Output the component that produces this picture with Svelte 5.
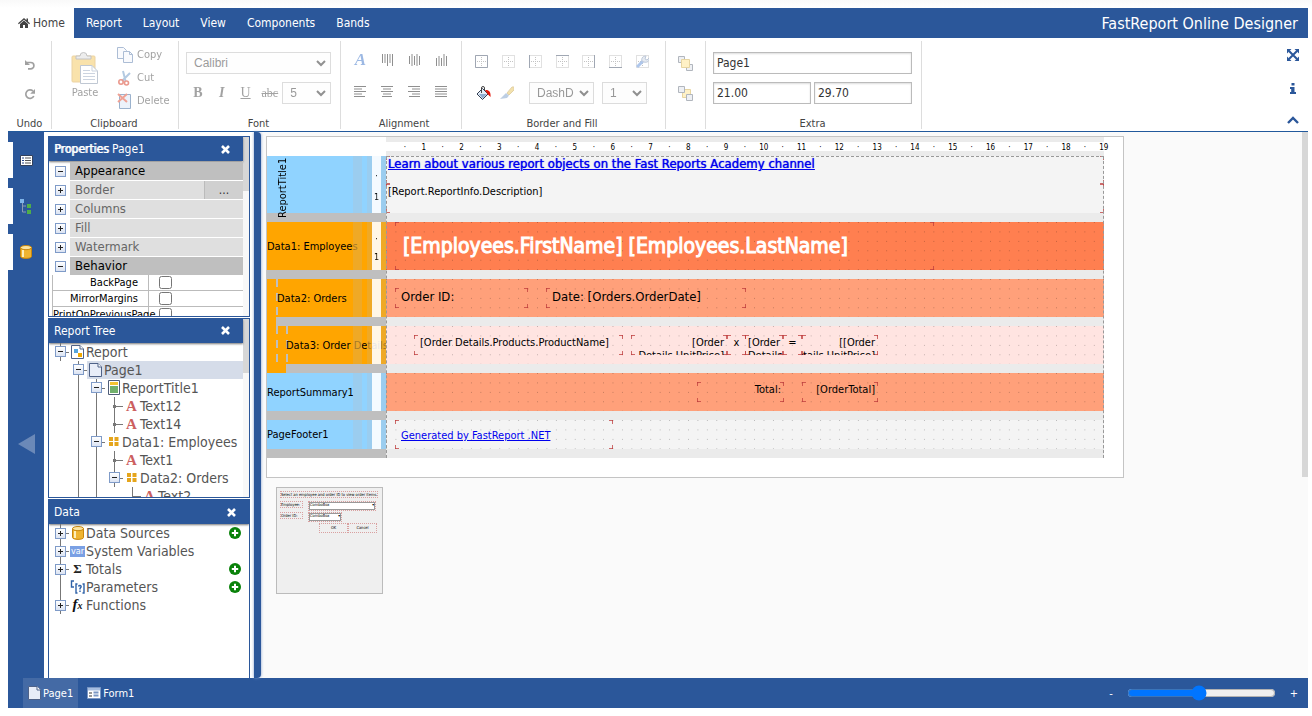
<script>
  const menu = ['Report', 'Layout', 'View', 'Components', 'Bands'];

  const props = [
    { label: 'Appearance', head: true },
    { label: 'Border', more: true },
    { label: 'Columns' },
    { label: 'Fill' },
    { label: 'Watermark' },
    { label: 'Behavior', head: true }
  ];
  const flags = ['BackPage', 'MirrorMargins', 'PrintOnPreviousPage'];

  // guides: one letter per indent cell. i = line, e = empty, t = toggle, b = branch, l = last branch
  const tree = [
    { guides: 't', icon: 'report', label: 'Report' },
    { guides: 'et', icon: 'page', label: 'Page1', selected: true },
    { guides: 'eit', icon: 'title', label: 'ReportTitle1' },
    { guides: 'eiib', icon: 'text', label: 'Text12' },
    { guides: 'eiib', icon: 'text', label: 'Text14' },
    { guides: 'eit', icon: 'band', label: 'Data1: Employees' },
    { guides: 'eiib', icon: 'text', label: 'Text1' },
    { guides: 'eiit', icon: 'band', label: 'Data2: Orders' },
    { guides: 'eiiel', icon: 'text', label: 'Text2' }
  ];

  const data = [
    { guides: 't', icon: 'db', label: 'Data Sources', closed: true, add: true },
    { guides: 't', icon: 'var', label: 'System Variables', closed: true },
    { guides: 't', icon: 'sum', label: 'Totals', closed: true, add: true },
    { guides: 'i', icon: 'param', label: 'Parameters', add: true },
    { guides: 't', icon: 'fx', label: 'Functions', closed: true }
  ];

  const ticks = Array.from({ length: 19 }, (_, i) => i + 1);

  // object boxes are in pixels from the band's top left corner
  const bands = [
    {
      name: 'ReportTitle1', kind: 'blue', h: 57, fill: '#f4f4f4', vertical: true, ruler: true,
      items: [
        { x: 0, y: 0, w: 718, h: 28, cls: 'learn solid', text: 'Learn about various report objects on the Fast Reports Academy channel', link: true },
        { x: 0, y: 28, w: 718, h: 29, cls: 'desc solid', text: '[Report.ReportInfo.Description]' }
      ]
    },
    {
      name: 'Data1: Employees', kind: 'orange', h: 48, fill: '#ff7f50', ruler: true,
      items: [{ x: 9, y: 0, w: 539, h: 48, cls: 'emp', text: '[Employees.FirstName] [Employees.LastName]' }]
    },
    {
      name: 'Data2: Orders', kind: 'orange', h: 38, fill: '#ffa07a', level: 1,
      items: [
        { x: 9, y: 9, w: 133, h: 20, cls: 'big', text: 'Order ID:' },
        { x: 160, y: 9, w: 200, h: 20, cls: 'big', text: 'Date: [Orders.OrderDate]' }
      ]
    },
    {
      name: 'Data3: Order Details', kind: 'orange', h: 38, fill: '#ffe4e1', level: 2,
      items: [
        { x: 28, y: 9, w: 209, h: 20, cls: '', text: '[Order Details.Products.ProductName]' },
        { x: 245, y: 9, w: 96, h: 20, cls: 'right', text: '[Order Details.UnitPrice]' },
        { x: 341, y: 9, w: 19, h: 20, cls: 'tight', text: 'x' },
        { x: 359, y: 9, w: 38, h: 20, cls: 'right', text: '[Order Details.Quantity]' },
        { x: 397, y: 9, w: 19, h: 20, cls: 'tight', text: '=' },
        { x: 416, y: 9, w: 76, h: 20, cls: 'right ending', text: '[[Order Details.UnitPrice]' }
      ]
    },
    {
      name: 'ReportSummary1', kind: 'blue', h: 38, fill: '#ffa07a',
      items: [
        { x: 311, y: 9, w: 87, h: 20, cls: 'right', text: 'Total:' },
        { x: 416, y: 9, w: 76, h: 20, cls: 'right', text: '[OrderTotal]' }
      ]
    },
    {
      name: 'PageFooter1', kind: 'blue', h: 29, fill: '#f4f4f4',
      items: [{ x: 9, y: 0, w: 218, h: 29, cls: 'foot', text: 'Generated by FastReport .NET', link: true }]
    }
  ];
</script>

{#snippet glyph(name)}
  {#if name === 'home'}
    <svg width="12" height="12" viewBox="0 0 12 12" fill="#444"><path d="M6 1 0 6.300l.8.9L6 2.700l5.200 4.500.8-.9L10 4.500V1.500H8.500v1.700z" /><path d="M2 7 6 3.500 10 7v4H7V8H5v3H2z" /></svg>
  {:else if name === 'undo'}
    <svg width="12" height="12" viewBox="0 0 12 12" fill="none"><path d="M2.500 3.500h4.200a3.200 3.200 0 0 1 0 6.400H4" stroke="#444" stroke-width="1.700" /><path d="M1 1v5h5z" fill="#444" /></svg>
  {:else if name === 'redo'}
    <svg width="12" height="12" viewBox="0 0 12 12" fill="none"><path d="M9.800 8A4.200 4.200 0 1 1 9 3.200" stroke="#444" stroke-width="1.700" /><path d="M11 1v4.800H6.200z" fill="#444" /></svg>
  {:else if name === 'paste'}
    <svg width="28" height="32" viewBox="0 0 28 32"><rect x="1" y="4" width="23" height="26" rx="1" fill="#f5c65a" stroke="#d9a848" /><path d="M5 7h15V4h-4a3.500 3.500 0 0 0-7 0H5z" fill="#ddd" stroke="#888" /><path d="M9.500 13.500H21l5.500 5.500v12.500h-17z" fill="#fff" stroke="#8292a8" /><path d="M21 13.500V19h5.500M12 18.500h7M12 21.500h12M12 24.500h12M12 27.500h12" fill="none" stroke="#9aabc2" /></svg>
  {:else if name === 'copy'}
    <svg width="16" height="16" viewBox="0 0 16 16" fill="#f4f7fd" stroke="#5b7dac"><path d="M.500.500h6l3 3v8h-9z" /><path d="M6.500 4.500h6l3 3v8h-9z" /><path d="M12.500 4.500v3h3" fill="none" /></svg>
  {:else if name === 'cut'}
    <svg width="16" height="16" viewBox="0 0 16 16" fill="none"><path d="M6 1 8.500 11M13 3 5 11" stroke="#6a96c4" stroke-width="2" /><circle cx="4" cy="12" r="2.200" stroke="#d6331c" stroke-width="1.600" /><circle cx="9.500" cy="13" r="2" stroke="#d6331c" stroke-width="1.600" /></svg>
  {:else if name === 'delete'}
    <svg width="16" height="16" viewBox="0 0 16 16" fill="none"><path d="M2.500 1.500h11v14h-11z" fill="#dbe7f6" stroke="#39679c" /><path d="m1 1 9 8M10 1 1 9" stroke="#e0452c" stroke-width="2" /></svg>
  {:else if name === 'valign-top' || name === 'valign-mid' || name === 'valign-bottom'}
    <svg width="13" height="13" viewBox="0 0 13 13" stroke="#222"><path d={name === 'valign-top' ? 'M1.500 0v9M4 0v9M6.500 0v12M9 0v9M11.500 0v12' : name === 'valign-mid' ? 'M1.500 2v8M4 0v12M6.500 2v9M9 0v12M11.500 2v9' : 'M1.500 4v8M4 2v10M6.500 4v8M9 0v12M11.500 2v10'} /></svg>
  {:else if name === 'left' || name === 'center' || name === 'right' || name === 'justify'}
    <svg width="13" height="12" viewBox="0 0 13 12" stroke="#222"><path d={name === 'left' ? 'M0 .500h12M0 3h8M0 5.500h12M0 8h8M0 10.500h11' : name === 'center' ? 'M0 .500h12M2 3h8M0 5.500h12M2 8h8M1 10.500h10' : name === 'right' ? 'M0 .500h12M4 3h8M0 5.500h12M4 8h8M1 10.500h11' : 'M0 .500h12M0 3h12M0 5.500h12M0 8h12M0 10.500h12'} /></svg>
  {:else if name.startsWith('bd-')}
    <svg width="13" height="13" viewBox="0 0 13 13" fill="none" stroke="#44526a">
      <path d="M.500.500h12v12H.500z" stroke-dasharray="1 1" stroke="#888" />
      <path d="M6.500 2v9M2 6.500h9" stroke-dasharray="1 1" stroke="#888" />
      <path d={name === 'bd-all' ? 'M.500.500h12v12H.500z' : name === 'bd-left' ? 'M.500 0v13' : name === 'bd-top' ? 'M0 .500h13' : name === 'bd-right' ? 'M12.500 0v13' : name === 'bd-bottom' ? 'M0 12.500h13' : 'M0 0'} />
      {#if name === 'bd-edit'}<path d="m1 12 6-6" stroke="#5f8fd8" stroke-width="3" /><path d="M6 6c-1-3 1-5 4-5L9 4l2 1 2-2c1 3-2 5-5 4z" fill="#ccd6e4" stroke="#7e93b4" />{/if}
    </svg>
  {:else if name === 'bucket'}
    <svg width="15" height="14" viewBox="0 0 15 14"><path d="m1 8 5.500-5.500L12 8l-5.500 5.500z" fill="#e4edf7" stroke="#333e52" /><path d="M3 8h8l-4.500 4.500z" fill="#8eacd0" /><path d="M5.500 7V2a1.500 1.500 0 0 1 3 0v2" fill="none" stroke="#444" /><path d="M9 4c4-.500 6 2 5.500 7L11.500 8z" fill="#e3170a" /></svg>
  {:else if name === 'brush'}
    <svg width="14" height="14" viewBox="0 0 14 14"><path d="m7 7 5-6h2v3L9 9z" fill="#e8c45c" stroke="#c5a452" /><path d="M6 7 9 9.500 7 12l-7 1z" fill="#7e9fc8" /></svg>
  {:else if name === 'front' || name === 'back'}
    <svg width="15" height="15" viewBox="0 0 15 15" fill="#dfe3ea" stroke="#66707e">
      {#if name === 'front'}<path d="M.500.500h6v6h-6zM8.500 8.500h6v6h-6z" /><path d="M3.500 3.500h8v8h-8z" fill="#ffe48f" stroke="#d0ac48" />
      {:else}<path d="M4.500 3.500h8v8h-8z" fill="#ffe48f" stroke="#d0ac48" /><path d="M.500.500h6v6h-6zM8.500 8.500h6v6h-6z" />{/if}
    </svg>
  {:else if name === 'expand'}
    <svg width="12" height="12" viewBox="0 0 12 12" fill="#2b579a"><path d="M0 0h4.500L0 4.500zM12 0v4.500L7.500 0zM0 12V7.500L4.500 12zM12 12H7.500L12 7.500z" /><path d="m2 2 8 8M10 2l-8 8" stroke="#2b579a" stroke-width="2" /></svg>
  {:else if name === 'info'}
    <svg width="6" height="11" viewBox="0 0 6 11" fill="#2b579a"><path d="M1.500 0h3v2.500h-3zM0 4h4.500v5H6v2H0V9h1.200V6H0z" /></svg>
  {:else if name === 'up'}
    <svg width="12" height="8" viewBox="0 0 12 8" fill="none" stroke="#2b579a" stroke-width="2.400"><path d="m1 7 5-5 5 5" /></svg>
  {:else if name === 'close'}
    <svg width="9" height="9" viewBox="0 0 9 9" stroke="#fff" stroke-width="2.600"><path d="m1 1 7 7M8 1 1 8" /></svg>
  {:else if name === 'list'}
    <svg width="13" height="11" viewBox="0 0 13 11"><path d="M.500.500h12v10H.500z" fill="#fff" stroke="#34415c" /><path d="M2 3h2M2 5.500h2M2 8h2" stroke="#26448a" /><path d="M5 3h6M5 5.500h6M5 8h6" stroke="#555" /></svg>
  {:else if name === 'nodes'}
    <svg width="12" height="15" viewBox="0 0 12 15"><path d="M2.500 4v9H6M2.500 7H6" fill="none" stroke="#8c9bb5" /><path d="M0 0h4v4H0z" fill="#7fb5ea" /><path d="M7 5h4v4H7zM7 11h4v4H7z" fill="#4fae4a" /></svg>
  {:else if name === 'db'}
    <svg width="12" height="14" viewBox="0 0 12 14"><path d="M.500 2.500v9c0 2.500 11 2.500 11 0v-9z" fill="#efb431" stroke="#c8860d" /><path d="M3 5v7" stroke="#fdeeb9" stroke-width="2" /><ellipse cx="6" cy="2.600" rx="5.500" ry="2.100" fill="#fbe3a0" stroke="#c8860d" /></svg>
  {:else if name === 'report' || name === 'page'}
    <svg width="13" height="14" viewBox="0 0 13 14"><path d="M.500.500h8.500l3.500 3.500v9.500H.500z" fill={name === 'page' ? '#e8edf8' : '#fff'} stroke="#4f6288" /><path d="M9 .500V4h3.500" fill="#fff" stroke="#4f6288" />{#if name === 'report'}<path d="M3 4h4v4H3z" fill="#56a5dd" /><path d="M7 8h4v4H7z" fill="#f0a800" />{/if}</svg>
  {:else if name === 'title'}
    <svg width="12" height="15" viewBox="0 0 12 15"><path d="M.500.500h11v14H.500z" fill="#fff" stroke="#4f5d78" /><path d="M2 2h8v3H2z" fill="#f5c431" /><path d="M2 6h8v7H2z" fill="#72b06c" /></svg>
  {:else if name === 'band'}
    <svg width="10" height="9" viewBox="0 0 10 9" fill="#e5a51c"><path d="M0 0h4v4H0zM5.500 0h4v4h-4zM0 5h4v4H0zM5.500 5h4v4h-4z" /></svg>
  {:else if name === 'text'}
    <b class="red-a">A</b>
  {:else if name === 'var'}
    <span class="var">var</span>
  {:else if name === 'sum'}
    <b class="sum">Σ</b>
  {:else if name === 'param'}
    <svg width="15" height="14" viewBox="0 0 15 14" fill="none" stroke="#2f62a8" stroke-width="1.400"><path d="M4 1H1.500v6H4M7.500 4H6v9h1.500M12.500 4H14v9h-1.500" /><path d="M8.500 6.500c.500-1.500 3-1.200 2.600.500L10 8.500v1M10 10.500V12" /></svg>
  {:else if name === 'fx'}
    <i class="fx">f<small>x</small></i>
  {:else if name === 'add'}
    <svg width="12" height="12" viewBox="0 0 12 12"><circle cx="6" cy="6" r="6" fill="#0a820a" /><path d="M6 2.800v6.400M2.800 6h6.400" stroke="#fff" stroke-width="2" /></svg>
  {:else if name === 'form'}
    <svg width="14" height="12" viewBox="0 0 14 12"><path d="M.500.500h13v11H.500z" fill="#fff" stroke="#7996c4" /><path d="M1 1h12v2.500H1z" fill="#a5bde0" /><path d="M2 6h3M2 9h3" stroke="#333" /><path d="M6.500 5.500h5M6.500 8.500h5" stroke="#7996c4" stroke-width="2" /></svg>
  {/if}
{/snippet}

{#snippet row(item)}
  <li class="node" class:selected={item.selected}>
    {#each item.guides.split('') as g}
      <span class="guide {g}">{#if g === 't'}<button class="toggle" class:closed={item.closed} aria-label="Toggle {item.label}"></button>{/if}</span>
    {/each}
    <span class="leaf">
      <span class="ico">{@render glyph(item.icon)}</span>
      <span class="label">{item.label}</span>
      {#if item.add}<button class="add" aria-label="Add to {item.label}">{@render glyph('add')}</button>{/if}
    </span>
  </li>
{/snippet}

<div class="app">
  <header>
    <nav>
      <button class="tab active">{@render glyph('home')} Home</button>
      {#each menu as m}<button class="tab">{m}</button>{/each}
    </nav>
    <h1>FastReport Online Designer</h1>
  </header>

  <div class="ribbon">
    <section class="group undo">
      <div class="body stack dim">
        <button aria-label="Undo">{@render glyph('undo')}</button>
        <button aria-label="Redo">{@render glyph('redo')}</button>
      </div>
      <h2>Undo</h2>
    </section>
    <section class="group clipboard">
      <div class="body dim">
        <button class="paste">{@render glyph('paste')}<span>Paste</span></button>
        <div class="cmds">
          <button>{@render glyph('copy')}Copy</button>
          <button>{@render glyph('cut')}Cut</button>
          <button>{@render glyph('delete')}Delete</button>
        </div>
      </div>
      <h2>Clipboard</h2>
    </section>
    <section class="group font">
      <div class="body rows dim">
        <select aria-label="Font family"><option>Calibri</option></select>
        <div class="line">
          <button class="fmt"><b>B</b></button>
          <button class="fmt"><b><i>I</i></b></button>
          <button class="fmt"><u>U</u></button>
          <button class="fmt abc"><s>abc</s></button>
          <select class="size" aria-label="Font size"><option>5</option></select>
        </div>
      </div>
      <h2>Font</h2>
    </section>
    <section class="group align">
      <div class="body tools dim">
        <button class="color-a" aria-label="Text color"><b><i>A</i></b></button>
        {#each ['valign-top', 'valign-mid', 'valign-bottom', 'left', 'center', 'right', 'justify'] as n}
          <button aria-label={n}>{@render glyph(n)}</button>
        {/each}
      </div>
      <h2>Alignment</h2>
    </section>
    <section class="group border">
      <div class="body rows">
        <div class="line icons dim">
          {#each ['bd-all', 'bd-none', 'bd-left', 'bd-top', 'bd-right', 'bd-bottom', 'bd-edit'] as n}
            <button aria-label={n}>{@render glyph(n)}</button>
          {/each}
        </div>
        <div class="line">
          <button class="pick" aria-label="Fill">{@render glyph('bucket')}</button>
          <button class="pick dim" aria-label="Line color">{@render glyph('brush')}</button>
          <select class="style dim" aria-label="Line style"><option>DashD</option></select>
          <select class="width dim" aria-label="Line width"><option>1</option></select>
        </div>
      </div>
      <h2>Border and Fill</h2>
    </section>
    <section class="group order">
      <div class="body rows dim">
        <button aria-label="Bring to front">{@render glyph('front')}</button>
        <button aria-label="Send to back">{@render glyph('back')}</button>
      </div>
    </section>
    <section class="group extra">
      <div class="body rows">
        <input aria-label="Name" value="Page1" />
        <div class="line pair">
          <input aria-label="Page width" value="21.00" />
          <input aria-label="Page height" value="29.70" />
        </div>
      </div>
      <h2>Extra</h2>
    </section>
    <div class="side">
      <button aria-label="Full screen">{@render glyph('expand')}</button>
      <button aria-label="About">{@render glyph('info')}</button>
      <button aria-label="Collapse ribbon">{@render glyph('up')}</button>
    </div>
  </div>

  <main>
    <aside class="rail">
      {#each ['list', 'nodes', 'db'] as n}<button class="flag" aria-label={n}>{@render glyph(n)}</button>{/each}
      <button class="hide" aria-label="Hide panels"></button>
    </aside>

    <div class="panels">
      <section class="panel">
        <div class="main">
          <div class="bar"><span><span class="strong">Properties</span> Page1</span><button aria-label="Close properties">{@render glyph('close')}</button></div>
          <div class="props">
            {#each props as p}
              <div class="prop" class:head={p.head}>
                <button class="toggle" class:closed={!p.head} aria-label="Toggle {p.label}"></button>
                <span>{p.label}</span>
                {#if p.more}<button class="more">...</button>{/if}
              </div>
            {/each}
            {#each flags as f}
              <label class="bool"><span>{f}</span><input type="checkbox" /></label>
            {/each}
          </div>
        </div>
        <div class="scroll"><i></i></div>
      </section>
      <section class="panel">
        <div class="main">
          <div class="bar"><span>Report Tree</span><button aria-label="Close tree">{@render glyph('close')}</button></div>
          <ul>{#each tree as t}{@render row(t)}{/each}</ul>
        </div>
        <div class="scroll"><i></i></div>
      </section>
      <section class="panel">
        <div class="main">
          <div class="bar"><span>Data</span><button aria-label="Close data">{@render glyph('close')}</button></div>
          <ul>{#each data as t}{@render row(t)}{/each}</ul>
        </div>
      </section>
    </div>
    <div class="splitter"></div>

    <div class="canvas">
      <div class="workspace">
        <div class="page">
          <div class="ruler">
            {#each ticks as t}<span class="tick">·</span><span class="tick">{t}</span>{/each}
          </div>
          {#each bands as b}
            <div class="band {b.kind} level{b.level ?? 0}">
              <div class="head" style:height="{b.h}px">
                <span class="name" class:vertical={b.vertical}>{b.name}</span>
                <i class="stripe one"></i><i class="stripe two"></i>
                <span class="vruler">{#if b.ruler}<span>·</span><span>1</span>{/if}</span>
                <i class="stripe two"></i>
              </div>
              <div class="field" style:background-color={b.fill}>
                {#each b.items as o}
                  <div class="obj {o.cls}" style:left="{o.x}px" style:top="{o.y}px" style:width="{o.w}px" style:height="{o.h}px">
                    {#if o.link}<a href="#report">{o.text}</a>{:else}<span>{o.text}</span>{/if}
                  </div>
                {/each}
              </div>
              <div class="grip"></div>
              <div class="gap"></div>
            </div>
          {/each}
          <div class="margins"></div>
        </div>

        <div class="form">
          <p><span class="mark">Select an employee and order ID to view order items.</span></p>
          <p><span class="mark key">Employee:</span><span class="mark combo wide">ComboBox<i>▾</i></span></p>
          <p><span class="mark key">Order ID:</span><span class="mark combo">ComboBox<i>▾</i></span></p>
          <p class="btns"><span class="mark">OK</span><span class="mark">Cancel</span></p>
        </div>
      </div>
      <div class="thumb"></div>
    </div>
  </main>

  <footer>
    <button class="sheet active">{@render glyph('page')}Page1</button>
    <button class="sheet">{@render glyph('form')}Form1</button>
    <div class="zoom">
      <button aria-label="Zoom out">-</button>
      <input type="range" min="0" max="100" value="48" aria-label="Zoom" />
      <button aria-label="Zoom in">+</button>
    </div>
  </footer>
</div>

<style>
  :global(body) { margin: 0; background: linear-gradient(#f9f9f9, #fff 8px); }
  .app { --blue: #2b579a; box-sizing: border-box; height: 100vh; padding: 8px 4px 8px 8px; display: flex; flex-direction: column; font: 12px "DejaVu Sans Condensed", "Noto Sans", sans-serif; color: #444; }
  .app :global(*) { box-sizing: border-box; }
  button { font: inherit; color: inherit; background: none; border: 0; padding: 0; margin: 0; display: flex; align-items: center; justify-content: center; }
  svg { display: block; flex: none; }
  h1, h2, p, ul { margin: 0; padding: 0; font-weight: normal; list-style: none; }
  i { font-style: normal; }

  header { flex: none; height: 30px; background: var(--blue); color: #fff; display: flex; justify-content: space-between; align-items: center; padding-right: 10px; }
  nav { display: flex; height: 100%; gap: 1px; }
  .tab { padding: 0 10px; gap: 3px; }
  .tab.active { background: #fff; color: #444; margin-right: 1px; padding-right: 9px; }
  h1 { font-size: 16px; }

  .ribbon { flex: none; height: 94px; background: #fff; border-bottom: 1px solid #22599c; display: flex; padding: 3px 0 2px; font-size: 11px; }
  .group { display: flex; flex-direction: column; justify-content: space-between; border-right: 1px solid #ddd; padding: 11px 9px 0 7px; }
  .group h2 { font-size: 11px; line-height: 10px; text-align: center; }
  .body { display: flex; }
  .dim { opacity: .5; }
  .rows { flex-direction: column; gap: 8px; }
  .line { display: flex; align-items: center; height: 22px; }
  .undo { width: 44px; padding: 18px 0 0; }
  .stack { flex-direction: column; align-items: center; gap: 17px; }
  .clipboard { width: 127px; padding-top: 2px; }
  .clipboard .body { justify-content: space-between; padding: 0 0 0 12px; }
  .paste { flex-direction: column; gap: 2px; padding-top: 9px; justify-content: flex-start; }
  .cmds { width: 52px; display: flex; flex-direction: column; }
  .cmds button { height: 23px; justify-content: flex-start; gap: 4px; }
  .font { width: 162px; }
  select { appearance: none; height: 22px; width: 100%; border: 1px solid #bbb; background: #fcfcfc url("data:image/svg+xml,%3Csvg xmlns='http://www.w3.org/2000/svg' width='10' height='7' fill='none' stroke='%23222' stroke-width='2'%3E%3Cpath d='m1 1 4 4 4-4'/%3E%3C/svg%3E") no-repeat right 4px center; color: #333; font: 12px "Liberation Sans", Arial, sans-serif; padding: 0 7px; border-radius: 0; }
  select.size { width: 49px; margin-left: auto; }
  .fmt { width: 24px; font: 14px "Liberation Serif", serif; }
  .fmt.abc { font-size: 12px; width: 25px; }
  .fmt i, .color-a i { font-style: italic; }
  .align { width: 121px; padding-right: 0; padding-top: 9px; padding-left: 6px; }
  .tools { display: grid; grid-template-columns: repeat(4, 27px); grid-auto-rows: 22px; row-gap: 9px; }
  .tools button:nth-child(-n + 4) { height: 20px; }
  .color-a { font: 17px "Liberation Serif", serif; color: #3b74c8; }
  .border { width: 204px; padding-left: 6px; }
  .icons { align-items: flex-start; padding-top: 3px; }
  .icons button { width: 27px; }
  .pick { width: 24px; margin-left: 3px; }
  .pick.dim { margin-left: 0; }
  select.style { width: 65px; margin-left: 10px; }
  select.width { width: 45px; margin-left: 8px; }
  .order { width: 40px; padding-right: 7px; }
  .order button { height: 22px; }
  .extra { width: 216px; }
  .extra input { width: 100%; height: 22px; border: 1px solid #bbb; box-shadow: inset 0 1px 2px #ddd; padding: 0 3px; font: inherit; font-size: 12px; color: #333; }
  .pair { gap: 3px; }
  .side { margin-left: auto; width: 30px; display: flex; flex-direction: column; align-items: center; justify-content: space-between; padding: 8px 0 5px; }

  main { flex: 1; min-height: 0; display: flex; }
  .rail { width: 36px; background: var(--blue); padding-top: 10px; display: flex; flex-direction: column; gap: 10px; }
  .flag { height: 36px; border-left: 5px solid #fff; padding-right: 5px; }
  .hide { width: 17px; height: 20px; margin: 154px 0 0 10px; background: #6b89b8; clip-path: polygon(0 50%, 100% 0, 100% 100%); }
  .panels { width: 210px; padding: 4px 4px 0; display: flex; flex-direction: column; gap: 1px; background: #fff; overflow: hidden; }
  .panel { flex: 1; min-height: 0; border: 1px solid var(--blue); display: flex; overflow: hidden; }
  .panel:last-child { margin-bottom: -2px; }
  .main { flex: 1; min-width: 0; }
  .bar { height: 24px; background: var(--blue); color: #fff; display: flex; align-items: center; justify-content: space-between; padding: 0 13px 0 5px; box-shadow: 0 1px 2px #777; position: relative; }
  .strong { text-shadow: 1px 0 #fff; }
  .scroll { width: 6px; background: #f8f8f8; }
  .scroll i { display: block; height: 54px; background: #d7d7d7; }
  .prop { display: flex; align-items: center; height: 18px; margin-top: 1px; font-size: 13px; }
  .prop .toggle { margin: 0 4px 0 6px; }
  .prop span { flex: 1; background: #dfdfdf; color: #666; line-height: 18px; padding-left: 5px; }
  .prop.head span { background: #bfbfbf; color: #000; }
  .toggle { width: 11px; height: 11px; border: 1px solid #7f9bc8; --ink: linear-gradient(#222, #222); background: var(--ink) center / 5px 1px no-repeat, linear-gradient(#fff, #dbe3f2); }
  .toggle.closed { background: var(--ink) center / 5px 1px no-repeat, var(--ink) center / 1px 5px no-repeat, linear-gradient(#fff, #dbe3f2); }
  .more { width: 39px; height: 18px; background: #d0d0d0; border-left: 1px solid #bbb; color: #333; font-size: 12px; }
  .bool { display: flex; height: 16px; margin-left: 3px; border: solid #bbb; border-width: 0 0 1px 1px; font-size: 11px; color: #000; align-items: center; }
  .bool span { width: 96px; padding-right: 10px; text-align: right; white-space: nowrap; border-right: 1px solid #bbb; line-height: 15px; }
  .bool input { width: 13px; height: 13px; margin: 0 0 0 10px; }

  ul { padding-left: 2px; }
  .node { display: flex; height: 18px; font-size: 14px; color: #555; white-space: nowrap; }
  .guide { width: 18px; flex: none; display: flex; align-items: center; justify-content: center; --line: linear-gradient(#777, #777); background-repeat: no-repeat; }
  .guide.i { background-image: var(--line); background-size: 1px 100%; background-position: 9px 0; }
  .guide.t { background-image: var(--line), var(--line); background-size: 1px 100%, 9px 1px; background-position: 9px 0, 9px 9px; }
  .guide.b { background-image: var(--line), var(--line), var(--line); background-size: 1px 100%, 9px 1px, 3px 3px; background-position: 9px 0, 9px 9px, 8px 8px; }
  .guide.l { background-image: var(--line), var(--line); background-size: 1px 10px, 9px 1px; background-position: 9px 0, 9px 9px; }
  .leaf { flex: 1; display: flex; align-items: center; line-height: 18px; }
  .selected .leaf { background: #d5dce9; }
  .ico { width: 17px; display: flex; justify-content: center; flex: none; }
  .add { margin: 0 8px 0 auto; }
  .red-a { font: bold 15px/18px "Liberation Serif", serif; color: #cc6060; }
  .sum { font: bold 13px/18px "Liberation Serif", serif; color: #222; }
  .var { background: #7aa0e4; color: #fff; font-size: 9px; line-height: 11px; padding: 0 1px; }
  .fx { font: italic bold 15px/18px "Liberation Serif", serif; color: #111; }
  .fx small { font-size: 10px; }

  .splitter { width: 7px; background: var(--blue); border-radius: 0 4px 4px 0; box-shadow: 0 0 3px #7e9ac8; position: relative; }
  .canvas { flex: 1; min-width: 0; background: #fafafa; display: flex; overflow: hidden; justify-content: space-between; }
  .thumb { flex: none; width: 6px; height: 345px; background: #d7d7d7; }
  .workspace { padding: 4px 0 0 5px; }
  .page { position: relative; border: 1px solid #c4c4c4; background: #fff; width: 858px; padding: 0 0 19px; color: #000; }
  .ruler { display: flex; margin-left: 119px; width: 19cm; height: 19px; background: linear-gradient(#ebebeb 5px, #fff 5px 14px, #ebebeb 14px); font-size: 8px; line-height: 21px; }
  .tick { flex: none; width: 5mm; position: relative; left: calc(5mm / 2); text-align: center; }
  .band { display: grid; grid-template-columns: 119px 19cm; grid-template-rows: auto 9px; --c: #90d3ff; --s: #a0cbe8; background: linear-gradient(90deg, var(--edge, #bfbfbf) 119px, #ebebeb 119px) no-repeat; background-size: calc(119px + 19cm) 100%; }
  .orange { --c: #ffa500; --s: #e8ab36; }
  .level1, .level2 { --edge: #ffa500; }
  .head { background: var(--c); display: flex; min-width: 0; position: relative; }
  .name { flex: 1; min-width: 0; white-space: nowrap; font-size: 11px; align-self: center; }
  .name.vertical { writing-mode: vertical-rl; transform: rotate(180deg); align-self: flex-start; flex: 0 0 86px; height: 57px; margin-top: 5px; padding-left: 54px; line-height: 32px; }
  .stripe { background: var(--s); opacity: .7; flex: none; }
  .stripe.one { width: 9px; margin-right: 5px; }
  .stripe.two { width: 5px; }
  .vruler { flex: none; width: 9px; background: #fff; opacity: .9; font-size: 9px; display: flex; flex-direction: column; align-items: center; justify-content: space-evenly; line-height: 12px; padding-top: 4px; }
  .level1 .head { background-image: repeating-linear-gradient(#bfbfbf 0 8px, transparent 8px 14px); background-repeat: no-repeat; background-size: 2px 100%; background-position: 9px 0; }
  .level2 .head { background-image: repeating-linear-gradient(#bfbfbf 0 8px, transparent 8px 14px), repeating-linear-gradient(#bfbfbf 0 8px, transparent 8px 14px); background-repeat: no-repeat; background-size: 2px 100%; background-position: 9px 0, 19px 0; }
  .level1 .name { padding-left: 10px; }
  .level2 .name { padding-left: 19px; }
  .grip { background: #bfbfbf; }
  .level1 .grip { margin-left: 9px; }
  .level2 .grip { margin-left: 19px; }
  .gap { background: #ebebeb; }
  .field { position: relative; background-image: conic-gradient(from 270deg at 1px 1px, rgba(0, 0, 0, .25) 90deg, transparent 0); background-size: calc(1cm / 4) calc(1cm / 4); }
  .obj { --r: linear-gradient(rgba(190, 60, 60, .75), rgba(190, 60, 60, .75)); position: absolute; overflow: hidden; font-size: 11px; line-height: 13px; padding: 1px 6px 0; background: var(--r) 0 0 / 4px 1px, var(--r) 0 0 / 1px 4px, var(--r) 100% 0 / 4px 1px, var(--r) 100% 0 / 1px 4px, var(--r) 0 100% / 4px 1px, var(--r) 0 100% / 1px 4px, var(--r) 100% 100% / 4px 1px, var(--r) 100% 100% / 1px 4px; background-repeat: no-repeat; }
  .solid { background-color: #f4f4f4; padding: 0 2px; }
  .obj a { color: #0000ee; }
  .learn { font-size: 13px; line-height: 16px; }
  .learn a { text-shadow: 0 0 1px #0000ee; }
  .desc { line-height: 15px; }
  .emp { font-size: 21px; line-height: 46px; color: #fff; padding: 1px 8px 0; -webkit-text-stroke: 1px #fff; }
  .big { font-size: 13px; line-height: 16px; }
  .right { text-align: right; padding: 1px 3px 0; }
  .ending { display: flex; justify-content: flex-end; }
  .ending span { flex: none; width: min-content; }
  .tight { padding: 1px 0 0; text-align: center; }
  .foot { line-height: 30px; }
  .margins { position: absolute; left: 119px; top: 19px; bottom: 19px; width: 19cm; border: 1px dashed #999; border-bottom: 0; pointer-events: none; }

  .form { margin: 9px 0 0 10px; width: 107px; height: 107px; border: 1px solid #bbb; background: #efefef; padding: 4px; font-size: 4px; line-height: 5px; color: #000; }
  .form p { display: flex; margin-bottom: 5px; align-items: flex-start; white-space: nowrap; }
  .mark { outline: 1px dotted #d9a0a0; }
  .key { width: 21px; margin-right: 7px; }
  .combo { display: flex; justify-content: space-between; width: 32px; height: 8px; background: #fff; border: 1px solid #999; margin-bottom: -2px; line-height: 4px; }
  .combo.wide { width: 66px; }
  .btns { gap: 2px; justify-content: flex-end; padding-right: 2px; }
  .btns .mark { width: 27px; height: 8px; line-height: 8px; text-align: center; }

  footer { flex: none; height: 30px; background: var(--blue); color: #fff; display: flex; padding-left: 15px; font-size: 11px; }
  .sheet { padding: 0 5px; gap: 2px; }
  .sheet.active { background: #446aa5; margin-right: 4px; }
  .zoom { margin-left: auto; display: flex; align-items: center; gap: 14px; padding-right: 10px; }
  .zoom input { width: 149px; margin: 0; }
</style>
